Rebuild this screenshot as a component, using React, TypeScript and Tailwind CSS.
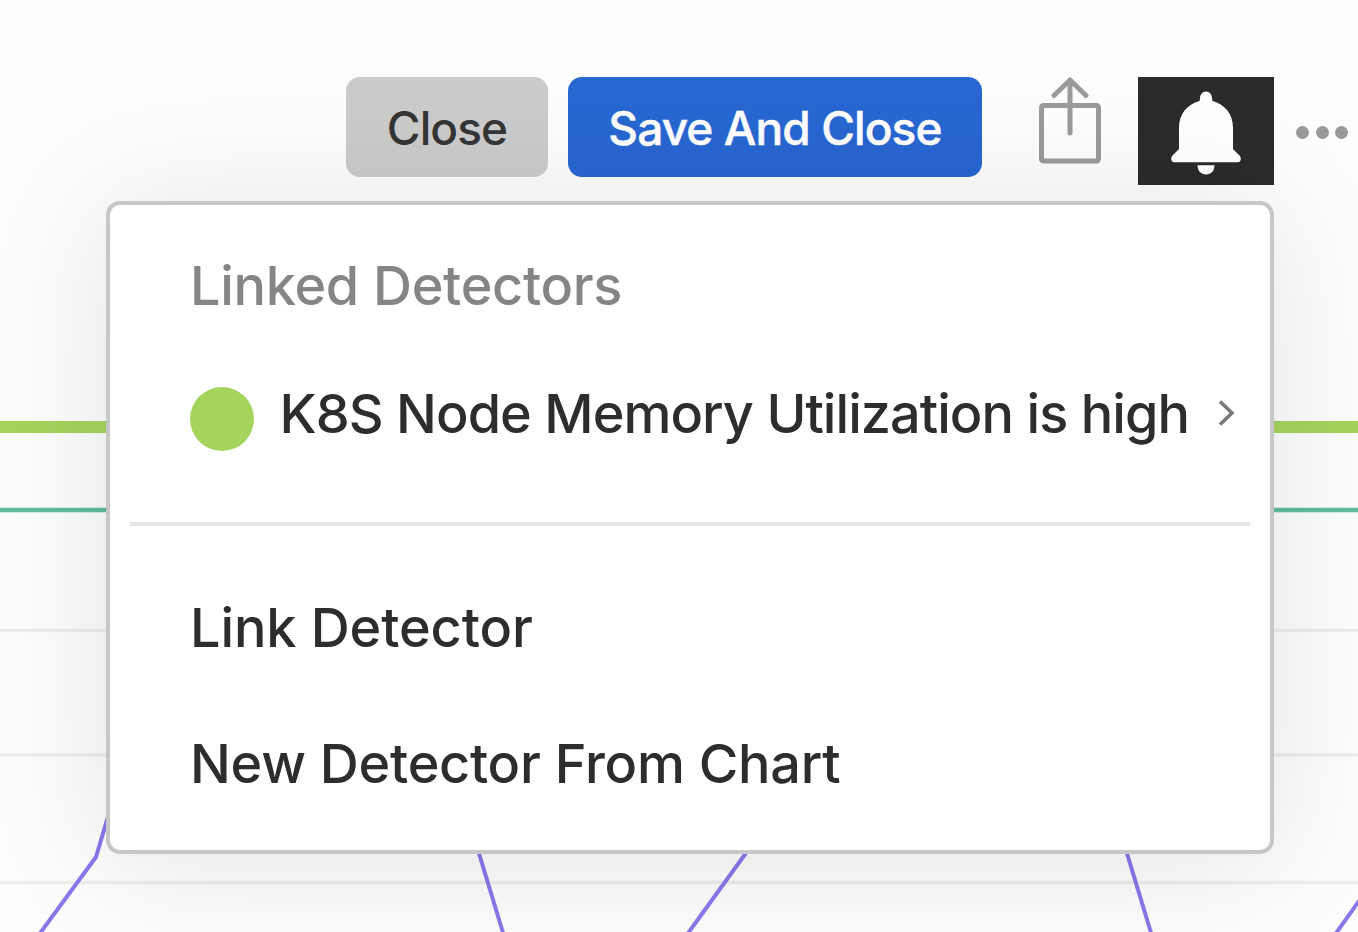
function Chart() {
  return (
    <svg className="absolute inset-0" width="1358" height="932" viewBox="0 0 1358 932" fill="none">
      <g stroke="#eeeeee" strokeWidth="3.5">
        <path d="M0 630.5H1358" />
        <path d="M0 755H1358" />
        <path d="M0 882.5H1358" />
      </g>
      <path d="M0 427H1358" stroke="#a5d45d" strokeWidth="12" />
      <path d="M0 510H1358" stroke="#5fbd9d" strokeWidth="4.5" />
      <g stroke="#8a77ea" strokeWidth="4" strokeLinejoin="round">
        <path d="M38 936L96 857L112 803" />
        <path d="M474 837L504 936" />
        <path d="M686 936L746 853L756 839" />
        <path d="M1122 837L1152 936" />
        <path d="M1334 936L1364 894" />
      </g>
    </svg>
  );
}

function ShareIcon() {
  return (
    <svg width="64" height="90" viewBox="0 0 64 90" fill="none" stroke="#9a9a9a" strokeWidth="5">
      <rect x="3.5" y="28.5" width="57" height="55.5" rx="2" />
      <path d="M32 56V4M16 18.5L32 3L48 18.5" strokeLinecap="round" strokeLinejoin="round" />
    </svg>
  );
}

function BellIcon() {
  return (
    <svg width="136" height="108" viewBox="0 0 136 108" fill="#ffffff">
      <path d="M62 21.5C62 17.5 64.5 14.5 68 14.5C71.5 14.5 74 17.5 74 21.5L74.5 24C87 27.5 95 37 95 51V72L101.5 78.5C102.3 79.5 102.8 80.5 102.8 82C102.8 84 101.5 85.3 99.5 85.3H36.5C34.5 85.3 33.2 84 33.2 82C33.2 80.5 33.7 79.5 34.5 78.5L41 72V51C41 37 49 27.5 61.5 24Z" />
      <path d="M59.5 88.3H76.5C76.5 94 73 97.5 68 97.5C63 97.5 59.5 94 59.5 88.3Z" />
    </svg>
  );
}

export default function App() {
  return (
    <div className="relative h-[932px] w-[1358px] overflow-hidden bg-[#fdfdfd] font-['Inter','Liberation_Sans',sans-serif] text-[#2d2d2d]">
      <Chart />
      <header className="relative flex h-[185px] items-start pt-[77px] pl-[346px]">
        <button className="h-[100px] w-[202px] rounded-[14px] bg-[#cbcbcb] text-[46px] leading-[102px] font-medium tracking-[-0.9px] text-[#353535]">
          Close
        </button>
        <button className="ml-5 h-[100px] w-[414px] rounded-[14px] bg-[#2866d1] text-[46px] leading-[102px] font-medium tracking-[-0.9px] whitespace-nowrap text-[#fdfdff] [-webkit-text-stroke:0.5px_#fdfdff]">
          Save And Close
        </button>
        <button className="ml-14 h-[90px] w-16" aria-label="Share">
          <ShareIcon />
        </button>
        <button className="ml-9 h-[108px] w-[136px] bg-[#2b2b2b]" aria-label="Detectors">
          <BellIcon />
        </button>
        <button className="mt-[49px] ml-[22px] flex gap-[6.5px]" aria-label="More">
          <span className="size-[13px] rounded-full bg-[#999999]" />
          <span className="size-[13px] rounded-full bg-[#999999]" />
          <span className="size-[13px] rounded-full bg-[#999999]" />
        </button>
      </header>

      <div className="absolute top-[201px] left-[106px] flex h-[653px] w-[1168px] flex-col rounded-[14px] border-4 border-[#c7c7c7] bg-white pt-[45px] text-[54px] leading-[72px] font-medium whitespace-nowrap shadow-[0_8px_130px_rgba(0,0,0,0.105)]">
        <h2 className="pl-20 tracking-[-0.3px] text-[#858585]">Linked Detectors</h2>
        <div className="mt-[56px] flex h-[72px] items-center pl-20">
          <span className="mt-[9px] size-16 shrink-0 rounded-full bg-[#a5d45d]" />
          <span className="ml-[25.5px] w-[908px] tracking-[-0.95px]">K8S Node Memory Utilization is high</span>
          <svg className="mb-[2px] ml-[30px]" width="18" height="28" viewBox="0 0 18 28" fill="none" stroke="#777777" strokeWidth="3.5">
            <path d="M2 2.5L14 14L2 25.5" />
          </svg>
        </div>
        <hr className="mx-5 mt-[72px] border-t-4 border-[#e6e6e6]" />
        <div className="mt-[66px] pl-20 tracking-[-0.1px]">Link Detector</div>
        <div className="mt-[64px] pl-20 tracking-[-0.25px]">New Detector From Chart</div>
      </div>
    </div>
  );
}
